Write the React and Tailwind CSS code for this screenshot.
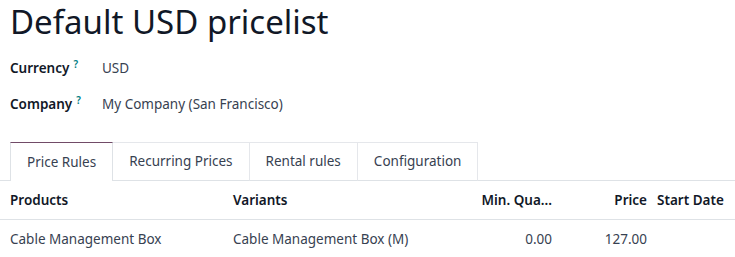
export default function App() {
  const tabs = ['Price Rules', 'Recurring Prices', 'Rental rules', 'Configuration'];

  return (
    <div className="w-[735px] h-[257px] bg-white overflow-hidden font-['Noto_Sans',sans-serif] text-[#374151]">
      {/* Title */}
      <h1 className="px-[10px] text-[33px] leading-[44px] text-[#111827]">Default USD pricelist</h1>

      {/* Fields */}
      <div className="px-[10px] pt-[14px] flex flex-col gap-[16px] text-[13.5px]">
        <div className="flex items-center h-[20px]">
          <span className="w-[92px] font-semibold text-[#111827]">
            Currency<sup className="ml-[4px] text-[#017e84] text-[10px] font-semibold">?</sup>
          </span>
          <span>USD</span>
        </div>
        <div className="flex items-center h-[20px]">
          <span className="w-[92px] font-semibold text-[#111827]">
            Company<sup className="ml-[4px] text-[#017e84] text-[10px] font-semibold">?</sup>
          </span>
          <span>My Company (San Francisco)</span>
        </div>
      </div>

      {/* Tabs */}
      <div className="mt-[28px] flex border-b border-[#dee2e6] pl-[10px] h-[39px]">
        {tabs.map((t, i) => (
          <div
            key={t}
            className={`px-[16px] flex items-center text-[13.5px] border-x border-t -mb-px ${
              i === 0
                ? 'border-[#dee2e6] border-t-[#714b67] bg-white'
                : 'border-[#e5e7eb] border-l-0 border-b border-b-[#dee2e6]'
            }`}
          >
            {t}
          </div>
        ))}
      </div>

      {/* Table */}
      <table className="w-full text-[13.5px] border-collapse">
        <thead>
          <tr className="h-[38px] border-b border-[#dee2e6] text-[#111827]">
            <th className="text-left pl-[10px] w-[233px] font-semibold">Products</th>
            <th className="text-left font-semibold">Variants</th>
            <th className="text-right w-[110px] font-semibold">Min. Qua...</th>
            <th className="text-right w-[95px] font-semibold">Price</th>
            <th className="text-left pl-[10px] w-[88px] font-semibold">Start Date</th>
          </tr>
        </thead>
        <tbody>
          <tr className="h-[40px]">
            <td className="pl-[10px]">Cable Management Box</td>
            <td>Cable Management Box (M)</td>
            <td className="text-right">0.00</td>
            <td className="text-right">127.00</td>
            <td></td>
          </tr>
        </tbody>
      </table>
    </div>
  );
}
